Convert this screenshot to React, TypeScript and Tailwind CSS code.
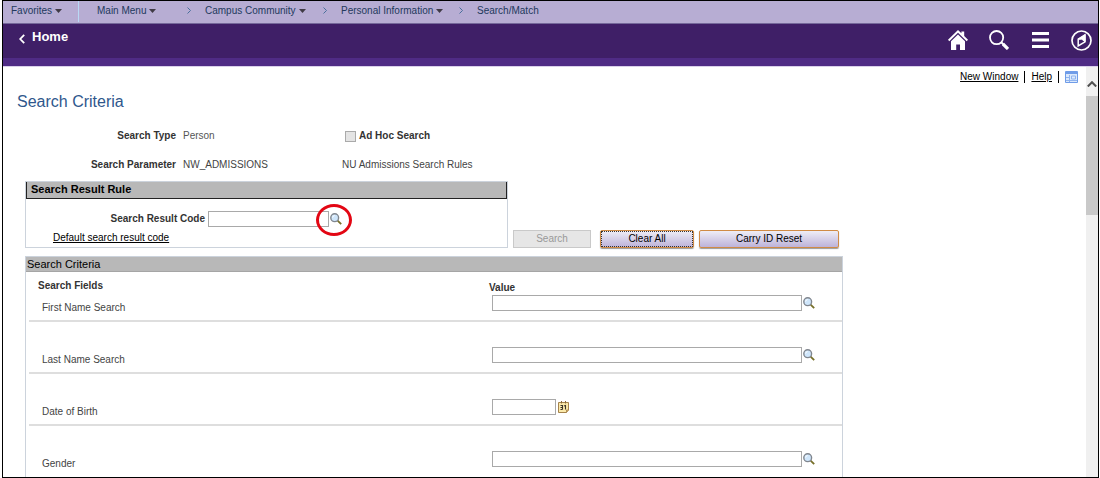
import type { ReactNode } from "react"

const crumbs = [
  { label: "Main Menu", menu: true, width: "w-[90px]" },
  { label: "Campus Community", menu: true, width: "w-[118px]" },
  { label: "Personal Information", menu: true, width: "w-[118px]" },
  { label: "Search/Match", menu: false, width: "" },
]

const fields = [
  { id: "first-name", label: "First Name Search", type: "lookup" },
  { id: "last-name", label: "Last Name Search", type: "lookup" },
  { id: "birth-date", label: "Date of Birth", type: "date" },
  { id: "gender", label: "Gender", type: "lookup" },
]

function Caret() {
  return (
    <svg className="ml-[3px] h-1 w-[7px]" viewBox="0 0 7 4" fill="#3f3a45">
      <path d="M0 0h7L3.5 4z" />
    </svg>
  )
}

function LookupIcon() {
  return (
    <svg className="h-3 w-3" viewBox="0 0 12 12" fill="none">
      <path d="M7.6 7.6l3.6 3.6" stroke="#77702a" strokeWidth="1.8" />
      <circle cx="4.7" cy="4.7" r="3.9" fill="#cfe6fb" stroke="#80868e" strokeWidth="1.4" />
      <path d="M2.6 4.6a2.2 2.2 0 0 1 2-2" stroke="#fff" strokeWidth="1" />
    </svg>
  )
}

function CalendarIcon() {
  return (
    <svg className="h-3 w-[11px]" viewBox="0 0 11 12">
      <path d="M.5 1.5h10v7.5l-2 2.5h-8z" fill="#fbe9a9" stroke="#a5834c" />
      <path d="M10.5 9h-2v2.5" fill="#d8b26a" stroke="#a5834c" strokeWidth=".8" />
      <path d="M3.5 0v2.5M7.5 0v2.5" stroke="#8a6a3a" />
      <path d="M2.5 4.5h2v4M2.5 6.5h2M2.5 8.5h2M6 5l1.5-.5v4" fill="none" stroke="#3d3528" strokeWidth="1.1" />
    </svg>
  )
}

function ToolbarButton({ label, children }: { label: string; children: ReactNode }) {
  return (
    <button type="button" aria-label={label} className="flex h-[22px] w-[22px] items-center justify-center text-white">
      {children}
    </button>
  )
}

function Breadcrumbs() {
  return (
    <nav className="flex h-[23px] border-b border-[#75689a] bg-[#b7add3] text-[#22395c]">
      <div className="flex h-[21px] w-[76px] items-center border-r border-[#b9d9f5] pl-2">
        <button type="button" className="flex items-center pb-0.5">
          Favorites
          <Caret />
        </button>
      </div>
      <ul className="flex h-[21px] items-center pb-0.5 pl-[18px]">
        {crumbs.map((crumb, i) => (
          <li key={crumb.label} className="flex items-center">
            {i > 0 && (
              <svg className="mr-[14px] h-[7px] w-1" viewBox="0 0 4 7" fill="none" stroke="#496f9b">
                <path d="M.5.5l3 3-3 3" />
              </svg>
            )}
            <div className={crumb.width}>
              <button type="button" className="flex items-center whitespace-nowrap">
                {crumb.label}
                {crumb.menu && <Caret />}
              </button>
            </div>
          </li>
        ))}
      </ul>
    </nav>
  )
}

function Banner() {
  return (
    <header className="flex h-[42px] items-start justify-between border-b-8 border-[#4f2b85] bg-[#3f1f67] pl-4 pr-[6px] pt-[5px]">
      <a href="#home" className="flex items-center text-[13px] leading-4 font-bold text-white">
        <svg className="mt-1 mr-[7px] h-[10px] w-[6px]" viewBox="0 0 6 10" fill="none" stroke="currentColor" strokeWidth="1.8">
          <path d="M5.2.8L1.2 5l4 4.2" />
        </svg>
        Home
      </a>
      <div className="flex gap-[19px]">
        <ToolbarButton label="Home">
          <svg className="h-5 w-5" viewBox="0 0 20 20" fill="currentColor">
            <path d="M10 0l3.4 3.3V1.5h2.8v4.6L20 9.8l-1.3 1.4L10 2.8l-8.7 8.4L0 9.8z" />
            <path d="M10 4.6l7 6.7V20h-5v-5.5H8.2V20H3v-8.7z" />
          </svg>
        </ToolbarButton>
        <ToolbarButton label="Search">
          <svg className="h-5 w-5" viewBox="0 0 20 20" fill="none" stroke="currentColor">
            <circle cx="7.6" cy="7.6" r="6.6" strokeWidth="1.8" />
            <path d="M12.5 12.5l2 2" strokeWidth="2" />
            <path d="M14 14l5 5" strokeWidth="3.2" />
          </svg>
        </ToolbarButton>
        <ToolbarButton label="Actions">
          <svg className="h-4 w-[17px]" viewBox="0 0 17 16" fill="currentColor">
            <path d="M0 0h17v3H0zM0 6.5h17v3H0zM0 13h17v3H0z" />
          </svg>
        </ToolbarButton>
        <ToolbarButton label="Navigator">
          <svg className="h-[21px] w-[21px]" viewBox="0 0 21 21" fill="none" stroke="currentColor">
            <circle cx="10.5" cy="10.5" r="9.5" strokeWidth="1.7" />
            <path d="M14 4.8v7L7.2 16V9.2z" strokeWidth="1.5" />
            <path d="M14 4.8v7l-3.2-2.6-3.6 0z" fill="currentColor" />
          </svg>
        </ToolbarButton>
      </div>
    </header>
  )
}

function PageLinks() {
  return (
    <div className="mt-0.5 flex h-4 items-center justify-end pr-2 text-black">
      <a href="#new-window" className="underline">
        New Window
      </a>
      <span className="mx-[6px] h-3 w-px bg-black" />
      <a href="#help" className="underline">
        Help
      </a>
      <span className="mx-[6px] h-3 w-px bg-black" />
      <button type="button" aria-label="Personalize page">
        <svg className="h-3 w-[13px]" viewBox="0 0 13 12">
          <path d="M.5.5h12v11H.5z" fill="#dbe9fc" stroke="#6f9ce8" />
          <path d="M1 1h11v2H1z" fill="#6f9ce8" />
          <path d="M1 6.5h4M1 9.5h11M4.5 4v7M6.5 5h4v3h-4z" fill="none" stroke="#8fb3ee" />
        </svg>
      </button>
    </div>
  )
}

function SearchType() {
  return (
    <div className="grid grid-cols-[173px_152px_1fr] items-center gap-x-[7px] gap-y-[15px] pt-4">
      <span className="text-right font-bold">Search Type</span>
      <span className="text-[#555]">Person</span>
      <label className="flex h-4 items-center gap-[3px] pl-[3px] font-bold">
        <input type="checkbox" disabled className="h-[11px] w-[11px] appearance-none border border-[#aaa] bg-[#e4e4e4]" />
        Ad Hoc Search
      </label>
      <span className="text-right font-bold">Search Parameter</span>
      <span className="text-[#444]">NW_ADMISSIONS</span>
      <span className="text-[#444]">NU Admissions Search Rules</span>
    </div>
  )
}

function ResultRule() {
  return (
    <section className="w-full max-w-[483px] border border-[#ccd3dc]">
      <h2 className="h-[17px] border-r border-b border-l border-[#222] bg-[#b8b8b8] pl-1 text-[11px] leading-[14px] font-bold text-black">
        Search Result Rule
      </h2>
      <div className="flex items-center pt-3">
        <label htmlFor="result-code" className="w-[179px] text-right font-bold">
          Search Result Code
        </label>
        <input id="result-code" type="text" className="ml-[3px] h-4 w-[121px] border border-[#a9a9a9] bg-white px-1" />
        <button type="button" aria-label="Look up Search Result Code" className="relative ml-px">
          <LookupIcon />
          <span className="absolute -top-[9px] -left-[14px] h-8 w-9 rounded-[50%] border-[3px] border-[#e30613]" />
        </button>
      </div>
      <a href="#default-code" className="mt-[5px] mb-[3px] ml-[27px] inline-block text-black underline">
        Default search result code
      </a>
    </section>
  )
}

function CriteriaTable() {
  return (
    <section className="mt-2 max-w-[818px] flex-1 border-x border-t border-[#ccd3dc]">
      <h2 className="h-[15px] border-b border-[#a5a5a5] bg-[#b8b8b8] pl-px text-[11px] leading-[14px] text-black">Search Criteria</h2>
      <div className="pl-[3px]">
        <table className="w-full table-fixed border-collapse text-left">
          <thead>
            <tr className="h-[22px] align-bottom">
              <th className="w-[460px] pb-0.5 pl-[9px]">Search Fields</th>
              <th>Value</th>
            </tr>
          </thead>
          <tbody>
            {fields.map((field) => (
              <tr key={field.id} className="h-[52px] border-b-2 border-[#dedede] align-bottom first:h-[27px] last:h-[51px] last:border-b-0">
                <td className="pb-[6px] pl-[13px] text-[#444]">
                  <label htmlFor={field.id}>{field.label}</label>
                </td>
                <td className="pb-[9px] pl-[3px]">
                  {field.type === "lookup" ? (
                    <div className="flex items-center gap-px">
                      <input id={field.id} type="text" className="h-4 w-[310px] border border-[#a9a9a9] bg-white px-1" />
                      <button type="button" aria-label={`Look up ${field.label}`}>
                        <LookupIcon />
                      </button>
                    </div>
                  ) : (
                    <div className="flex items-center gap-0.5">
                      <input id={field.id} type="text" className="h-4 w-16 border border-[#a9a9a9] bg-white px-1" />
                      <button type="button" aria-label="Choose a date">
                        <CalendarIcon />
                      </button>
                    </div>
                  )}
                </td>
              </tr>
            ))}
          </tbody>
        </table>
      </div>
    </section>
  )
}

export default function App() {
  return (
    <div className="flex min-h-screen bg-white pr-px pl-0.5 font-['Liberation_Sans',Arial,sans-serif] text-[10px] leading-3 text-[#333]">
      <div className="flex min-w-0 flex-1 flex-col border border-black">
        <Breadcrumbs />
        <Banner />
        <div className="flex flex-1 border-t border-[#d9d0ea]">
          <main className="flex min-w-0 flex-1 flex-col">
            <PageLinks />
            <h1 className="mt-[7px] pl-[14px] text-base leading-5 text-[#2f578c]">Search Criteria</h1>
            <SearchType />
            <div className="flex flex-1 flex-col pt-[10px] pl-[22px]">
              <div className="flex items-end">
                <ResultRule />
                <button type="button" disabled className="ml-[5px] h-[18px] w-[78px] border border-[#c9c9c9] bg-[#e6e6e6] text-[#999]">
                  Search
                </button>
                <button
                  type="button"
                  className="ml-[9px] h-[18px] w-[94px] rounded-xs border border-[#d08b45] bg-linear-to-b from-[#efedf6] to-[#bdb3d9] text-black shadow-[0_1px_1px_#999]"
                >
                  <span className="flex h-full items-center justify-center border border-dotted border-[#333]">Clear All</span>
                </button>
                <button
                  type="button"
                  className="ml-[5px] h-[18px] w-[140px] rounded-xs border border-[#d08b45] bg-linear-to-b from-[#efedf6] to-[#bdb3d9] text-black shadow-[0_1px_1px_#999]"
                >
                  Carry ID Reset
                </button>
              </div>
              <CriteriaTable />
            </div>
          </main>
          <div className="flex w-3 flex-col items-center bg-[#f0f0f0]">
            <svg className="mt-[14px] mb-[9px] h-[6px] w-[10px]" viewBox="0 0 10 6" fill="none" stroke="#505050" strokeWidth="2">
              <path d="M.8 5.5L5 1.2l4.2 4.3" />
            </svg>
            <div className="h-[119px] w-full bg-[#c9c9c9]" />
          </div>
        </div>
      </div>
    </div>
  )
}
